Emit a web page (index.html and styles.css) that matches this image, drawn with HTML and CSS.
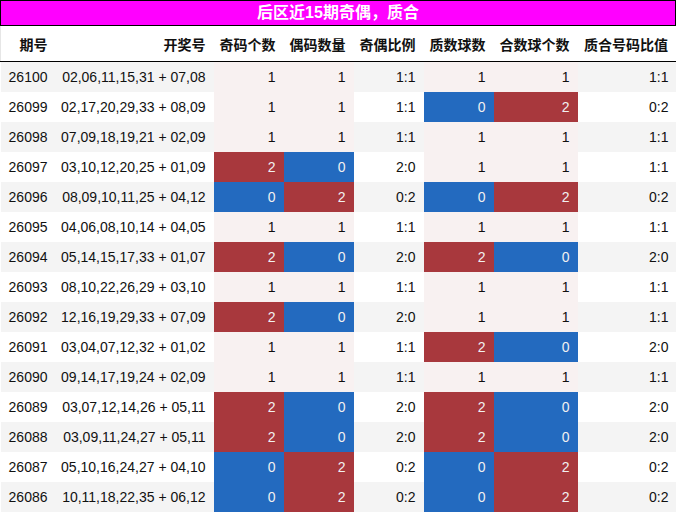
FILE: index.html
```html
<!DOCTYPE html>
<html lang="zh">
<head>
<meta charset="utf-8">
<link rel="stylesheet" href="styles.css">
</head>
<body>
<div class="title">后区近15期奇偶，质合</div>
<table class="grid">
<colgroup>
<col class="c1"><col class="c2"><col class="c3"><col class="c3"><col class="c3"><col class="c3"><col class="c7"><col class="c8">
</colgroup>
<thead>
<tr><th>期号</th><th>开奖号</th><th>奇码个数</th><th>偶码数量</th><th>奇偶比例</th><th>质数球数</th><th>合数球个数</th><th>质合号码比值</th></tr>
</thead>
<tbody>
<tr><td>26100</td><td>02,06,11,15,31 + 07,08</td><td class="mid">1</td><td class="mid">1</td><td>1:1</td><td class="mid">1</td><td class="mid">1</td><td>1:1</td></tr>
<tr><td>26099</td><td>02,17,20,29,33 + 08,09</td><td class="mid">1</td><td class="mid">1</td><td>1:1</td><td class="lo">0</td><td class="hi">2</td><td>0:2</td></tr>
<tr><td>26098</td><td>07,09,18,19,21 + 02,09</td><td class="mid">1</td><td class="mid">1</td><td>1:1</td><td class="mid">1</td><td class="mid">1</td><td>1:1</td></tr>
<tr><td>26097</td><td>03,10,12,20,25 + 01,09</td><td class="hi">2</td><td class="lo">0</td><td>2:0</td><td class="mid">1</td><td class="mid">1</td><td>1:1</td></tr>
<tr><td>26096</td><td>08,09,10,11,25 + 04,12</td><td class="lo">0</td><td class="hi">2</td><td>0:2</td><td class="lo">0</td><td class="hi">2</td><td>0:2</td></tr>
<tr><td>26095</td><td>04,06,08,10,14 + 04,05</td><td class="mid">1</td><td class="mid">1</td><td>1:1</td><td class="mid">1</td><td class="mid">1</td><td>1:1</td></tr>
<tr><td>26094</td><td>05,14,15,17,33 + 01,07</td><td class="hi">2</td><td class="lo">0</td><td>2:0</td><td class="hi">2</td><td class="lo">0</td><td>2:0</td></tr>
<tr><td>26093</td><td>08,10,22,26,29 + 03,10</td><td class="mid">1</td><td class="mid">1</td><td>1:1</td><td class="mid">1</td><td class="mid">1</td><td>1:1</td></tr>
<tr><td>26092</td><td>12,16,19,29,33 + 07,09</td><td class="hi">2</td><td class="lo">0</td><td>2:0</td><td class="mid">1</td><td class="mid">1</td><td>1:1</td></tr>
<tr><td>26091</td><td>03,04,07,12,32 + 01,02</td><td class="mid">1</td><td class="mid">1</td><td>1:1</td><td class="hi">2</td><td class="lo">0</td><td>2:0</td></tr>
<tr><td>26090</td><td>09,14,17,19,24 + 02,09</td><td class="mid">1</td><td class="mid">1</td><td>1:1</td><td class="mid">1</td><td class="mid">1</td><td>1:1</td></tr>
<tr><td>26089</td><td>03,07,12,14,26 + 05,11</td><td class="hi">2</td><td class="lo">0</td><td>2:0</td><td class="hi">2</td><td class="lo">0</td><td>2:0</td></tr>
<tr><td>26088</td><td>03,09,11,24,27 + 05,11</td><td class="hi">2</td><td class="lo">0</td><td>2:0</td><td class="hi">2</td><td class="lo">0</td><td>2:0</td></tr>
<tr><td>26087</td><td>05,10,16,24,27 + 04,10</td><td class="lo">0</td><td class="hi">2</td><td>0:2</td><td class="lo">0</td><td class="hi">2</td><td>0:2</td></tr>
<tr><td>26086</td><td>10,11,18,22,35 + 06,12</td><td class="lo">0</td><td class="hi">2</td><td>0:2</td><td class="lo">0</td><td class="hi">2</td><td>0:2</td></tr>
</tbody>
</table>
</body>
</html>
```
FILE: styles.css
```css
html, body {
  margin: 0;
  padding: 0;
  background: #ffffff;
}
body {
  font-family: "Liberation Sans", "Noto Sans CJK SC", Arial, sans-serif;
  color: #111;
  width: 676px;
}
.title {
  box-sizing: border-box;
  width: 676px;
  height: 26px;
  border: 1px solid #000;
  background: #ff00ff;
  color: #ffffff;
  font-family: "Liberation Sans", "Noto Sans CJK SC", sans-serif;
  font-weight: bold;
  font-size: 16px;
  line-height: 24px;
  text-align: center;
}
.grid {
  width: 676px;
  border-collapse: collapse;
  table-layout: fixed;
  font-size: 14px;
}
.c1 { width: 55px; }
.c2 { width: 158px; }
.c3 { width: 70px; }
.c7 { width: 84px; }
.c8 { width: 99px; }
.grid th {
  height: 35px;
  padding: 0 8px 0 0;
  text-align: right;
  font-family: "Noto Sans CJK SC", sans-serif;
  font-weight: bold;
  font-size: 14px;
  color: #111;
  border-bottom: 1px solid #000;
  background: #ffffff;
}
.grid thead tr {
  border-left: 1px solid #e6e6e6;
  border-right: 1px solid #e6e6e6;
}
.grid td {
  height: 30px;
  padding: 0 8px 0 0;
  text-align: right;
  white-space: nowrap;
}
.grid tbody tr:nth-child(odd) { background: #f4f4f4; }
.grid tbody tr:nth-child(even) { background: #ffffff; }
.grid td.mid { background: #f8f1f1; }
.grid td.hi { background: #a8383d; color: #f1f1f1; }
.grid td.lo { background: #236abf; color: #f1f1f1; }
```
